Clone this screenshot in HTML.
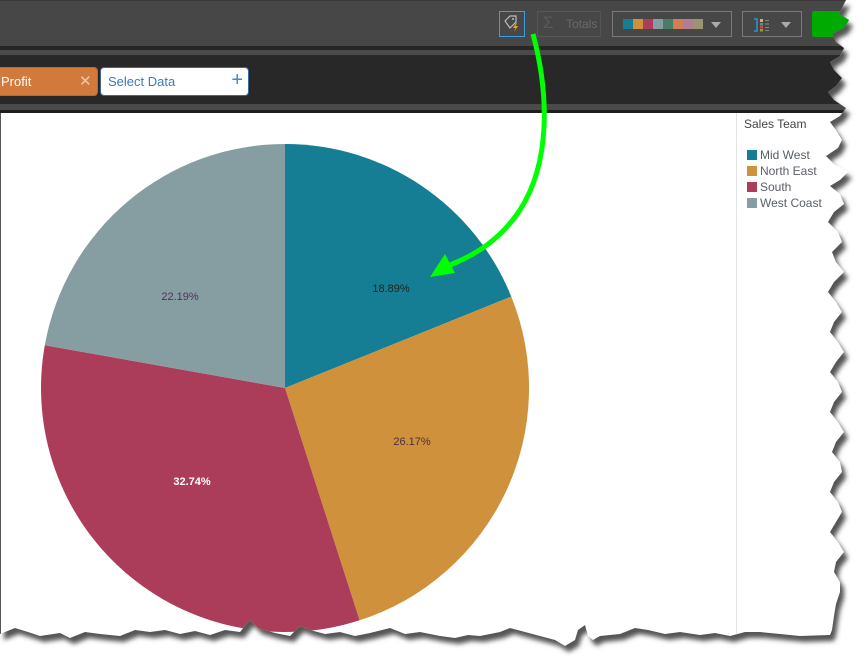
<!DOCTYPE html>
<html><head><meta charset="utf-8"><style>
*{margin:0;padding:0;box-sizing:border-box}
body{width:867px;height:670px;background:#fff;overflow:hidden;position:relative;font-family:"Liberation Sans",sans-serif}
#shadow{position:absolute;left:0;top:0;width:867px;height:670px}
#page{position:absolute;left:0;top:0;width:867px;height:670px;clip-path:url(#torn);-webkit-clip-path:url(#torn)}
.bar1{position:absolute;left:0;top:0;width:867px;height:46px;background:#474747;border-top:1px solid #3a3a3a}
.line{position:absolute;left:0;width:867px}
.btn{position:absolute;border:1px solid #6a6a6a}
</style></head><body>
<svg id="shadow" width="867" height="670">
<defs>
<filter id="bl"><feGaussianBlur stdDeviation="2.5"/></filter>
<clipPath id="torn"><polygon points="0,0 846,0 842,8 839,14 849,20 844,28 832,34 836,42 844,48 840,56 830,62 834,70 842,78 836,86 828,92 834,100 846,108 840,116 830,122 836,130 842,140 838,148 826,156 834,164 848,172 840,180 830,186 840,194 844,204 834,212 828,222 838,232 842,242 832,252 836,262 844,272 834,282 828,292 836,302 842,312 834,322 830,332 838,342 844,352 836,362 830,372 838,382 842,392 834,402 830,412 838,422 844,432 836,442 832,452 840,462 842,472 834,482 830,492 838,502 842,512 836,522 830,532 838,542 844,552 836,562 834,572 840,582 840,592 836,604 834,616 832,630 830,635 800,636 780,634 760,632 745,632 730,636 715,633 700,635 680,632 665,634 648,630 635,628 620,634 600,636 593,640 588,636 585,625 578,630 575,640 565,646 555,640 540,636 525,632 510,628 500,632 480,636 468,635 455,638 440,636 420,632 405,634 390,628 370,633 355,636 340,632 325,634 310,630 300,626 290,636 275,633 258,628 250,620 240,632 225,630 210,635 195,631 180,634 165,630 150,632 135,630 120,636 100,634 85,632 70,638 60,633 40,636 28,632 15,628 5,632 0,634"/></clipPath>
</defs>
<g filter="url(#bl)" transform="translate(4,6)"><polygon fill="#555" points="0,0 846,0 842,8 839,14 849,20 844,28 832,34 836,42 844,48 840,56 830,62 834,70 842,78 836,86 828,92 834,100 846,108 840,116 830,122 836,130 842,140 838,148 826,156 834,164 848,172 840,180 830,186 840,194 844,204 834,212 828,222 838,232 842,242 832,252 836,262 844,272 834,282 828,292 836,302 842,312 834,322 830,332 838,342 844,352 836,362 830,372 838,382 842,392 834,402 830,412 838,422 844,432 836,442 832,452 840,462 842,472 834,482 830,492 838,502 842,512 836,522 830,532 838,542 844,552 836,562 834,572 840,582 840,592 836,604 834,616 832,630 830,635 800,636 780,634 760,632 745,632 730,636 715,633 700,635 680,632 665,634 648,630 635,628 620,634 600,636 593,640 588,636 585,625 578,630 575,640 565,646 555,640 540,636 525,632 510,628 500,632 480,636 468,635 455,638 440,636 420,632 405,634 390,628 370,633 355,636 340,632 325,634 310,630 300,626 290,636 275,633 258,628 250,620 240,632 225,630 210,635 195,631 180,634 165,630 150,632 135,630 120,636 100,634 85,632 70,638 60,633 40,636 28,632 15,628 5,632 0,634"/></g>
</svg>
<div id="page">
<div style="position:absolute;inset:0;background:#fff"></div>
<div class="bar1"></div>
<div class="line" style="top:46px;height:4px;background:#262626"></div>
<div class="line" style="top:50px;height:5px;background:#4a4a4a"></div>
<div class="line" style="top:55px;height:49px;background:#282828"></div>
<div class="line" style="top:104px;height:6px;background:#4a4a4a"></div>
<div class="line" style="top:110px;height:3px;background:#1e1e1e"></div>
<div style="position:absolute;left:0;top:113px;width:1px;height:530px;background:#555"></div>
<div class="btn" style="left:499px;top:11px;width:26px;height:26px;border-color:#3d9be0">
<svg width="24" height="24" viewBox="0 0 24 24"><path d="M5 9 L10 4 L16 4 L16 10 L10 16 Z" fill="none" stroke="#bbb" stroke-width="1.2"/><circle cx="13" cy="7" r="1" fill="#bbb"/><path d="M16 11 L13 16 L15.5 16 L14 20 L18 14 L15.5 14 L17 11 Z" fill="#f0a020"/></svg></div>
<div class="btn" style="left:537px;top:11px;width:64px;height:26px;border-color:#555;color:#6a6a6a;font-size:12px;line-height:24px"><span style="position:absolute;left:5px;top:-1px;font-size:17px;color:#5a5a5a">Σ</span><span style="position:absolute;left:28px">Totals</span></div>
<div class="btn" style="left:612px;top:11px;width:120px;height:26px;border-color:#7a7a7a">
<div style="position:absolute;left:10px;top:7px;height:10px;width:80px;display:flex"><i style="flex:1;background:#167e94"></i><i style="flex:1;background:#d0913c"></i><i style="flex:1;background:#ac3d5a"></i><i style="flex:1;background:#869ea2"></i><i style="flex:1;background:#4b7a66"></i><i style="flex:1;background:#d17e54"></i><i style="flex:1;background:#b07e92"></i><i style="flex:1;background:#9a9470"></i></div>
<div style="position:absolute;left:98px;top:10px;border:5px solid transparent;border-top:6px solid #aaa"></div></div>
<div class="btn" style="left:742px;top:11px;width:60px;height:26px;border-color:#7a7a7a">
<svg width="30" height="24" style="position:absolute;left:8px;top:1px"><path d="M3 6 H6 V18 H3" fill="none" stroke="#2aa0e8" stroke-width="1.3"/><rect x="9" y="6" width="3" height="3" fill="#e8a860"/><rect x="9" y="10" width="3" height="2.5" fill="#3aa0a0"/><rect x="9" y="13" width="3" height="2.5" fill="#e04030"/><rect x="9" y="16" width="3" height="2.5" fill="#8aa030"/><path d="M14 7.5h4M14 11h4M14 14.5h4M14 17.5h4" stroke="#999" stroke-width="0.8"/></svg>
<div style="position:absolute;left:38px;top:10px;border:5px solid transparent;border-top:6px solid #aaa"></div></div>
<div style="position:absolute;left:812px;top:11px;width:40px;height:26px;background:#00aa00;border-radius:2px"></div>
<div style="position:absolute;left:-10px;top:67px;width:108px;height:29px;background:#d27a3c;border-radius:4px;border:1px solid #b96a30;color:#fff;font-size:13px;line-height:27px;padding-left:10px">Profit<span style="position:absolute;left:88px;top:0;color:#f2c7a6;font-size:15px">✕</span></div>
<div style="position:absolute;left:100px;top:67px;width:149px;height:29px;background:#fff;border-radius:4px;border:1px solid #3a6a96;color:#3d7ab8;font-size:13px;line-height:27px;padding-left:7px">Select Data<span style="position:absolute;right:5px;top:-1px;font-size:20px;color:#3d8ad0">+</span></div>
<div style="position:absolute;left:736px;top:113px;width:1px;height:530px;background:#e3e3e3"></div>
<div style="position:absolute;left:744px;top:117px;font-size:12px;color:#444">Sales Team</div>
<div style="position:absolute;left:747px;top:147px;font-size:12px;color:#5a5f66;line-height:16px">
<div><i style="display:inline-block;width:10px;height:10px;background:#167e94;margin-right:3px;vertical-align:-1px"></i>Mid West</div>
<div><i style="display:inline-block;width:10px;height:10px;background:#d0913c;margin-right:3px;vertical-align:-1px"></i>North East</div>
<div><i style="display:inline-block;width:10px;height:10px;background:#ac3d5a;margin-right:3px;vertical-align:-1px"></i>South</div>
<div><i style="display:inline-block;width:10px;height:10px;background:#869ea2;margin-right:3px;vertical-align:-1px"></i>West Coast</div>
</div>
<svg style="position:absolute;left:0;top:0" width="867" height="670">
<path d="M285,388 L285,144 A244,244 0 0,1 511.3,296.6 Z" fill="#167e94"/>
<path d="M285,388 L511.3,296.6 A244,244 0 0,1 359.6,620.3 Z" fill="#d0913c"/>
<path d="M285,388 L359.6,620.3 A244,244 0 0,1 44.8,345.2 Z" fill="#ac3d5a"/>
<path d="M285,388 L44.8,345.2 A244,244 0 0,1 285,144 Z" fill="#869ea2"/>
<g font-size="11" text-anchor="middle" font-family="Liberation Sans, sans-serif">
<text x="391" y="292" fill="#222">18.89%</text>
<text x="412" y="445" fill="#4a3040">26.17%</text>
<text x="192" y="485" fill="#fff" font-weight="bold">32.74%</text>
<text x="180" y="300" fill="#503060">22.19%</text>
</g>
<path d="M533,34 C548,90 552,160 520,210 C500,240 475,255 450,265" fill="none" stroke="#00ff00" stroke-width="5"/>
<polygon points="430,277 445,254 455,273" fill="#00ff00"/>
</svg>
</div>
</body></html>
